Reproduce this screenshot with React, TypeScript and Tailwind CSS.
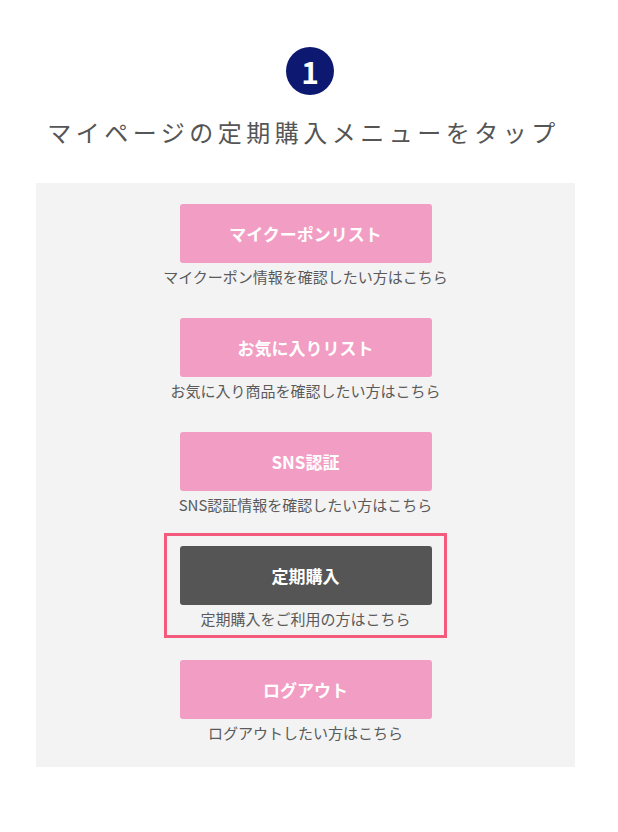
import React from 'react'

type MenuItem = {
  label: string
  note: string
  active?: boolean
}

const ITEMS: MenuItem[] = [
  { label: 'マイクーポンリスト', note: 'マイクーポン情報を確認したい方はこちら' },
  { label: 'お気に入りリスト', note: 'お気に入り商品を確認したい方はこちら' },
  { label: 'SNS認証', note: 'SNS認証情報を確認したい方はこちら' },
  { label: '定期購入', note: '定期購入をご利用の方はこちら', active: true },
  { label: 'ログアウト', note: 'ログアウトしたい方はこちら' },
]

const fontStack = {
  fontFamily: '"Noto Sans CJK JP", "Noto Sans", sans-serif',
}

export default function App() {
  return (
    <div className="min-h-[832px] w-[618px] bg-white pt-[47px]" style={fontStack}>
      <div className="flex justify-center pl-[2px]">
        <div className="flex h-[48px] w-[48px] items-center justify-center rounded-full bg-[#0d1870]">
          <span className="text-[30px] leading-none font-bold text-white">1</span>
        </div>
      </div>

      <h1 className="mt-[22px] pr-[11px] text-center text-[24px] leading-[30px] font-normal tracking-[4.5px] whitespace-nowrap text-[#555555]">
        マイページの定期購入メニューをタップ
      </h1>

      <div className="mt-[36px] ml-[36px] flex w-[539px] flex-col items-center gap-[9px] bg-[#f3f3f3] pt-[8px] pb-[15px]">
        {ITEMS.map((item) => (
          <div
            key={item.label}
            className={
              item.active
                ? 'flex w-[283px] flex-col items-center border-[3px] border-[#f45a7c] pt-[10px] pb-[6px]'
                : 'flex w-[283px] flex-col items-center border-[3px] border-transparent pt-[10px] pb-[6px]'
            }
          >
            <button
              className={
                item.active
                  ? 'flex h-[59px] w-[252px] items-center justify-center rounded-[3px] bg-[#555555] text-[17px] font-bold text-white'
                  : 'flex h-[59px] w-[252px] items-center justify-center rounded-[3px] bg-[#f29dc3] text-[17px] font-bold text-white'
              }
            >
              {item.label}
            </button>
            <p className="mt-[3px] text-[15px] leading-[21px] whitespace-nowrap text-[#5a5a5a]">
              {item.note}
            </p>
          </div>
        ))}
      </div>
    </div>
  )
}
